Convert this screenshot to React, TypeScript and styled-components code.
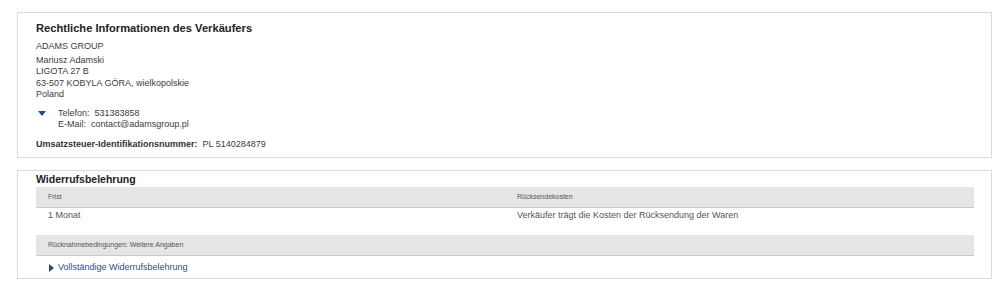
import styled, { createGlobalStyle } from "styled-components";

const GlobalStyle = createGlobalStyle`
  html, body {
    margin: 0;
    padding: 0;
    background: #ffffff;
  }
  body {
    font-family: "Liberation Sans", Arial, sans-serif;
    color: #3c3c3c;
  }
`;

const Page = styled.div`
  display: flex;
  flex-direction: column;
  gap: 12px;
  padding: 12px 0 0 17px;
`;

const Panel = styled.section<{ $compact?: boolean }>`
  box-sizing: border-box;
  width: 975px;
  border: 1px solid #dadada;
  padding: ${(p) => (p.$compact ? "0 17px 4px 18px" : "8px 18px 6.5px 18px")};
`;

const Title = styled.h2<{ $small?: boolean }>`
  margin: 0;
  font-size: ${(p) => (p.$small ? "10.5px" : "11.15px")};
  line-height: ${(p) => (p.$small ? "16px" : "14px")};
  font-weight: 700;
  color: #222222;
`;

const TextBlock = styled.div<{ $gap: number }>`
  margin-top: ${(p) => p.$gap}px;
  font-size: 9px;
  line-height: 11.5px;
  color: #3c3c3c;
`;

const ContactRow = styled.div`
  display: flex;
  margin-top: 7px;
  font-size: 9px;
  line-height: 11.5px;
  color: #3c3c3c;
`;

const Toggle = styled.div`
  width: 22px;
  flex: none;
  padding: 3.5px 0 0 2px;
  box-sizing: border-box;

  svg {
    display: block;
  }
`;

const Label = styled.span`
  font-weight: 700;
  color: #333333;
`;

const Bar = styled.div`
  display: grid;
  grid-template-columns: 1fr 1fr;
  height: 21px;
  box-sizing: border-box;
  background: #e5e5e5;
  border-bottom: 1px solid #c9c9c9;
  font-size: 7px;
  line-height: 20px;
  color: #555555;
`;

const Cell = styled.div`
  padding: 0 12px;
`;

const Row = styled.div`
  display: grid;
  grid-template-columns: 1fr 1fr;
  padding: 1.5px 0 14px;
  font-size: 9px;
  line-height: 11.5px;
  color: #555555;
`;

const LinkRow = styled.a`
  display: flex;
  align-items: center;
  gap: 4px;
  padding: 6px 0 0 13px;
  font-size: 9px;
  line-height: 11.5px;
  color: #2a4f8a;
  text-decoration: none;
  cursor: pointer;
`;

const Caret = ({ dir }: { dir: "down" | "right" }) =>
  dir === "down" ? (
    <svg width="8" height="5" viewBox="0 0 8 5">
      <path d="M0 0 L8 0 L4 5 Z" fill="#1f4b8c" />
    </svg>
  ) : (
    <svg width="5" height="8" viewBox="0 0 5 8">
      <path d="M0 0 L5 4 L0 8 Z" fill="#1f4b8c" />
    </svg>
  );

const App = (): JSX.Element => {
  return (
    <>
      <GlobalStyle />
      <Page>
        <Panel>
          <Title>Rechtliche Informationen des Verkäufers</Title>
          <TextBlock $gap={6}>ADAMS GROUP</TextBlock>
          <TextBlock $gap={2}>
            Mariusz Adamski
            <br />
            LIGOTA 27 B
            <br />
            63-507 KOBYLA GÓRA, wielkopolskie
            <br />
            Poland
          </TextBlock>
          <ContactRow>
            <Toggle>
              <Caret dir="down" />
            </Toggle>
            <div>
              Telefon:&nbsp; 531383858
              <br />
              E-Mail:&nbsp; contact@adamsgroup.pl
            </div>
          </ContactRow>
          <TextBlock $gap={8.5}>
            <Label>Umsatzsteuer-Identifikationsnummer:</Label>&nbsp; PL 5140284879
          </TextBlock>
        </Panel>

        <Panel $compact>
          <Title $small>Widerrufsbelehrung</Title>
          <Bar>
            <Cell>Frist</Cell>
            <Cell>Rücksendekosten</Cell>
          </Bar>
          <Row>
            <Cell>1 Monat</Cell>
            <Cell>Verkäufer trägt die Kosten der Rücksendung der Waren</Cell>
          </Row>
          <Bar>
            <Cell>Rücknahmebedingungen: Weitere Angaben</Cell>
          </Bar>
          <LinkRow>
            <Caret dir="right" />
            Vollständige Widerrufsbelehrung
          </LinkRow>
        </Panel>
      </Page>
    </>
  );
};

export default App;
